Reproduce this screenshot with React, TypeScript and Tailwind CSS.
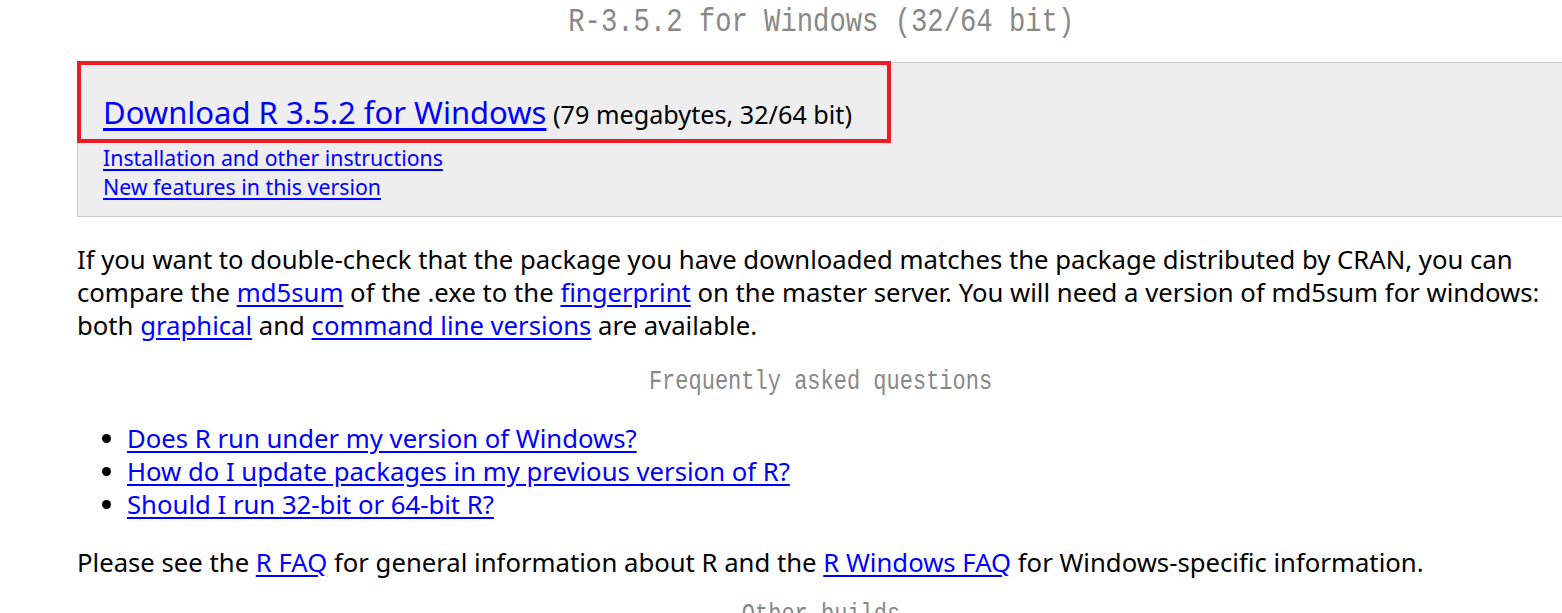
import React from "react";

const sans = { fontFamily: '"Noto Sans", "Open Sans", sans-serif' };

function Heading({ children, size }: { children: React.ReactNode; size: "lg" | "md" }) {
  return (
    <div className="flex h-[40px] w-[1488px] items-center justify-center overflow-visible">
      <span
        className={
          "inline-block origin-center scale-x-80 whitespace-nowrap font-['Liberation_Mono',monospace] leading-[40px] text-[#888888] " +
          (size === "lg" ? "text-[34px]" : "text-[27.5px]")
        }
      >
        {children}
      </span>
    </div>
  );
}

function A({ children }: { children: React.ReactNode }) {
  return <a className="text-[#0000ff] underline underline-offset-[3px]">{children}</a>;
}

export default function App() {
  return (
    <div className="relative h-[613px] w-[1562px] overflow-hidden bg-white text-black" style={sans}>
      <div className="pl-[77px]">
        <div className="pt-[2px]">
          <Heading size="lg">R-3.5.2 for Windows (32/64 bit)</Heading>
        </div>

        {/* download box */}
        <div className="mt-[20px] h-[155px] w-[1520px] border border-[#cccccc] bg-[#eeeeee] pl-[25px] pt-[32px]">
          <div className="flex h-[34px] items-baseline whitespace-pre leading-[34px]">
            <a className="text-[31px] text-[#0000ff] underline underline-offset-[4px]">Download R 3.5.2 for Windows</a>
            <span className="text-[25.2px]"> (79 megabytes, 32/64 bit)</span>
          </div>
          <div className="mt-[14px] flex flex-col items-start text-[21.3px] leading-[29px]">
            <A>Installation and other instructions</A>
            <A>New features in this version</A>
          </div>
        </div>

        <p className="mt-[26px] whitespace-nowrap text-[25.7px] leading-[33px]">
          If you want to double-check that the package you have downloaded matches the package distributed by CRAN, you can
          <br />
          compare the <A>md5sum</A> of the .exe to the <A>fingerprint</A> on the master server. You will need a version of
          md5sum for windows:
          <br />
          both <A>graphical</A> and <A>command line versions</A> are available.
        </p>

        <div className="mt-[20px]">
          <Heading size="md">Frequently asked questions</Heading>
        </div>

        <ul className="mt-[20px] list-disc pl-[50px] text-[25.7px] leading-[33px]">
          <li>
            <A>Does R run under my version of Windows?</A>
          </li>
          <li>
            <A>How do I update packages in my previous version of R?</A>
          </li>
          <li>
            <A>Should I run 32-bit or 64-bit R?</A>
          </li>
        </ul>

        <p className="mt-[25px] whitespace-nowrap text-[25.7px] leading-[33px]">
          Please see the <A>R FAQ</A> for general information about R and the <A>R Windows FAQ</A> for Windows-specific
          information.
        </p>

        <div className="mt-[16px]">
          <Heading size="md">Other builds</Heading>
        </div>
      </div>

      {/* red highlight drawn over the download line */}
      <div className="pointer-events-none absolute left-[77px] top-[61px] h-[82px] w-[814px] border-4 border-[#ed1c24]" />
    </div>
  );
}
